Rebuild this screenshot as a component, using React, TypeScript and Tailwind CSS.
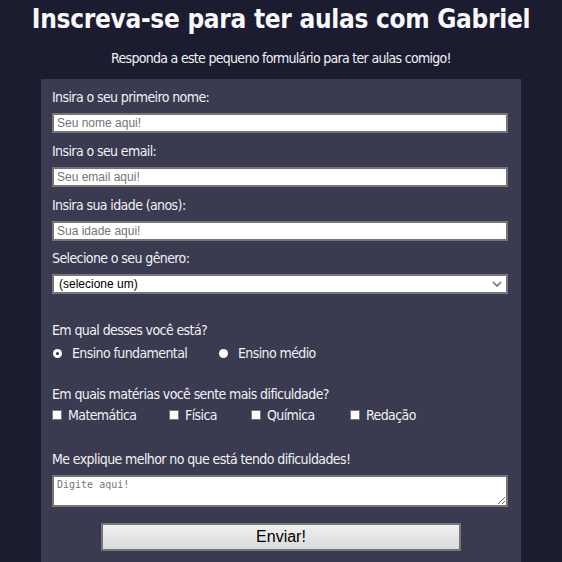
import React from "react";

const font = { fontFamily: '"DejaVu Sans Condensed", "DejaVu Sans", sans-serif' };

function Label({ children }: { children: React.ReactNode }) {
  return (
    <div className="h-[18px] text-[14px] leading-[18px] tracking-[-0.6px] text-[#f1f1f5]">
      {children}
    </div>
  );
}

function TextInput({ placeholder }: { placeholder: string }) {
  return (
    <input
      type="text"
      placeholder={placeholder}
      className="mt-[7px] block h-[20px] w-[456px] border-2 border-[#767676] bg-white px-[3px] text-[12px] text-black placeholder:text-[#757575] outline-none"
      style={{ fontFamily: '"Liberation Sans", Arial, sans-serif' }}
    />
  );
}

function Radio({ checked, label }: { checked?: boolean; label: string }) {
  return (
    <div className="flex items-center">
      <span className="flex h-[9px] w-[9px] items-center justify-center rounded-full bg-white">
        {checked && <span className="h-[3px] w-[3px] rounded-full bg-[#2a2a3a]" />}
      </span>
      <span className="ml-[10px]">{label}</span>
    </div>
  );
}

function Check({ label }: { label: string }) {
  return (
    <div className="flex items-center">
      <span className="h-[10px] w-[10px] border border-[#767676] bg-white" />
      <span className="ml-[6px]">{label}</span>
    </div>
  );
}

export default function App() {
  return (
    <div className="h-[562px] overflow-hidden bg-[#1c1c30] text-white" style={font}>
      <h1 className="pt-[4px] text-center text-[26px] font-bold leading-[30px] tracking-[-0.3px] text-[#f8f8fa]">
        Inscreva-se para ter aulas com Gabriel
      </h1>
      <p className="mt-[15px] text-center text-[14px] leading-[18px] tracking-[-0.7px] text-[#f1f1f5]">
        Responda a este pequeno formulário para ter aulas comigo!
      </p>
      <div className="mx-auto mt-[12px] h-[500px] w-[480px] bg-[#3a3a50] pl-[11px] pt-[9px] text-[14px]">
        <Label>Insira o seu primeiro nome:</Label>
        <TextInput placeholder="Seu nome aqui!" />
        <div className="mt-[9px]">
          <Label>Insira o seu email:</Label>
        </div>
        <TextInput placeholder="Seu email aqui!" />
        <div className="mt-[9px]">
          <Label>Insira sua idade (anos):</Label>
        </div>
        <TextInput placeholder="Sua idade aqui!" />
        <div className="mt-[8px]">
          <Label>Selecione o seu gênero:</Label>
        </div>
        <div
          className="mt-[7px] flex h-[20px] w-[456px] items-center justify-between border-2 border-[#767676] bg-white pl-[5px] pr-[4px] text-[12px] text-black"
          style={{ fontFamily: '"Liberation Sans", Arial, sans-serif' }}
        >
          <span>(selecione um)</span>
          <svg width="10" height="6" viewBox="0 0 10 6" fill="none">
            <path d="M1 1l4 4 4-4" stroke="#6b6b6b" strokeWidth="1.5" />
          </svg>
        </div>

        <div className="mt-[27px]">
          <Label>Em qual desses você está?</Label>
        </div>
        <div className="mt-[5px] flex h-[18px] items-center leading-[18px] tracking-[-0.6px] text-[#f1f1f5]">
          <div className="ml-[1px] w-[166px]">
            <Radio checked label="Ensino fundamental" />
          </div>
          <Radio label="Ensino médio" />
        </div>

        <div className="mt-[23px]">
          <Label>Em quais matérias você sente mais dificuldade?</Label>
        </div>
        <div className="mt-[3px] flex h-[18px] items-center leading-[18px] tracking-[-0.6px] text-[#f1f1f5]">
          <div className="w-[117px]">
            <Check label="Matemática" />
          </div>
          <div className="w-[82px]">
            <Check label="Física" />
          </div>
          <div className="w-[99px]">
            <Check label="Química" />
          </div>
          <Check label="Redação" />
        </div>

        <div className="mt-[26px]">
          <Label>Me explique melhor no que está tendo dificuldades!</Label>
        </div>
        <textarea
          placeholder="Digite aqui!"
          className="mt-[7px] block h-[32px] w-[456px] border-2 border-[#767676] bg-white px-[3px] py-[1px] text-[10px] leading-[13px] text-black placeholder:text-[#757575] outline-none"
          style={{ fontFamily: '"DejaVu Sans Mono", monospace', resize: "vertical" }}
        />
        <button
          className="ml-[49px] mt-[16px] block h-[28px] w-[360px] border-2 border-[#767676] bg-gradient-to-b from-[#f0f0f0] to-[#dadada] text-[16px] text-black"
          style={{ fontFamily: '"Liberation Sans", Arial, sans-serif' }}
        >
          Enviar!
        </button>
      </div>
    </div>
  );
}
